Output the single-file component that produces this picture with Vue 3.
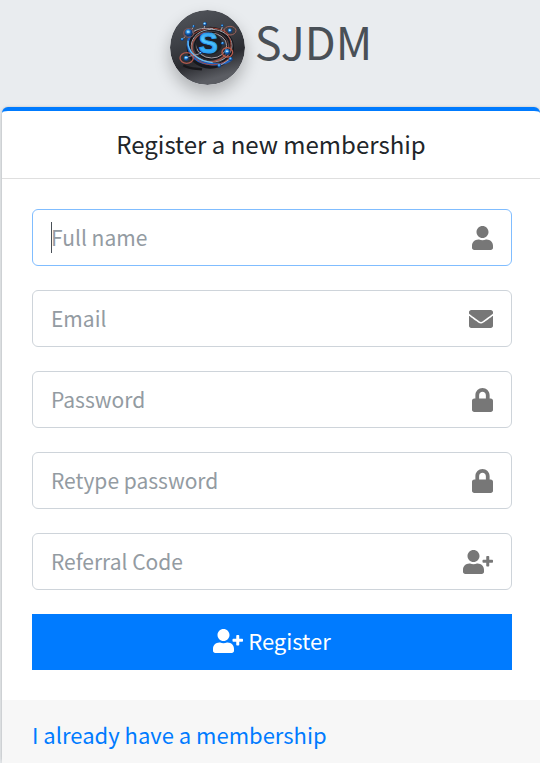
<script setup>
import { reactive } from 'vue'

const icons = {
  user: {
    width: 448,
    path: 'M224 256c70.7 0 128-57.3 128-128S294.7 0 224 0 96 57.3 96 128s57.3 128 128 128zm89.600 32h-16.700c-22.200 10.200-46.900 16-72.900 16s-50.600-5.800-72.900-16h-16.700C60.200 288 0 348.200 0 422.400V464c0 26.500 21.500 48 48 48h352c26.500 0 48-21.500 48-48v-41.600c0-74.200-60.200-134.400-134.400-134.400z',
  },
  envelope: {
    width: 512,
    path: 'M502.300 190.800c3.900-3.100 9.700-.2 9.700 4.700V400c0 26.500-21.500 48-48 48H48c-26.500 0-48-21.500-48-48V195.600c0-5 5.700-7.800 9.700-4.700 22.400 17.400 52.100 39.500 154.100 113.600 21.100 15.400 56.700 47.800 92.200 47.600 35.700.3 72-32.800 92.300-47.600 102-74.100 131.600-96.300 154-113.700zM256 320c23.200.4 56.600-29.200 73.400-41.400 132.700-96.300 142.800-104.700 173.400-128.700 5.800-4.500 9.200-11.500 9.200-18.900v-19c0-26.500-21.500-48-48-48H48c-26.500 0-48 21.500-48 48v19c0 7.400 3.400 14.300 9.200 18.900 30.600 23.900 40.700 32.400 173.400 128.700 16.800 12.200 50.200 41.800 73.400 41.400z',
  },
  lock: {
    width: 448,
    path: 'M400 224h-24v-72C376 68.200 307.800 0 224 0S72 68.200 72 152v72H48c-26.500 0-48 21.500-48 48v192c0 26.500 21.500 48 48 48h352c26.500 0 48-21.500 48-48V272c0-26.500-21.500-48-48-48zm-104 0H152v-72c0-39.700 32.300-72 72-72s72 32.300 72 72v72z',
  },
  userPlus: {
    width: 640,
    path: 'M624 208h-64v-64c0-8.800-7.200-16-16-16h-32c-8.800 0-16 7.200-16 16v64h-64c-8.800 0-16 7.200-16 16v32c0 8.800 7.200 16 16 16h64v64c0 8.800 7.200 16 16 16h32c8.800 0 16-7.200 16-16v-64h64c8.800 0 16-7.200 16-16v-32c0-8.800-7.200-16-16-16zm-400 48c70.700 0 128-57.300 128-128S294.700 0 224 0 96 57.300 96 128s57.300 128 128 128zm89.600 32h-16.700c-22.200 10.200-46.900 16-72.900 16s-50.600-5.800-72.900-16h-16.700C60.200 288 0 348.200 0 422.400V464c0 26.500 21.500 48 48 48h352c26.500 0 48-21.500 48-48v-41.600c0-74.200-60.200-134.400-134.400-134.400z',
  },
}

const fields = [
  { id: 'name', label: 'Full name', type: 'text', icon: icons.user, active: true },
  { id: 'email', label: 'Email', type: 'email', icon: icons.envelope },
  { id: 'password', label: 'Password', type: 'password', icon: icons.lock },
  { id: 'confirm', label: 'Retype password', type: 'password', icon: icons.lock },
  { id: 'referral', label: 'Referral Code', type: 'text', icon: icons.userPlus },
]

const form = reactive({ name: '', email: '', password: '', confirm: '', referral: '' })
</script>

<template>
  <div class="page">
    <header class="brand">
      <svg class="brand-logo" viewBox="30 30 225 225" aria-hidden="true">
        <defs>
          <linearGradient id="disc" x1="0" y1="0" x2="0.3" y2="1">
            <stop offset="0" stop-color="#54575d" />
            <stop offset="0.45" stop-color="#3d4046" />
            <stop offset="0.75" stop-color="#2a2b30" />
            <stop offset="1" stop-color="#5b5d63" />
          </linearGradient>
          <linearGradient id="letter" x1="0" y1="0" x2="0" y2="1">
            <stop offset="0" stop-color="#1f7ad0" />
            <stop offset="0.4" stop-color="#55cbff" />
            <stop offset="1" stop-color="#1c93ee" />
          </linearGradient>
          <radialGradient id="orb" cx="0.4" cy="0.35">
            <stop offset="0" stop-color="#8bdcff" />
            <stop offset="0.5" stop-color="#2486e0" />
            <stop offset="1" stop-color="#123c78" />
          </radialGradient>
        </defs>
        <circle cx="142.500" cy="142.500" r="112.500" fill="url(#disc)" />
        <g fill="none">
          <ellipse cx="151" cy="143" rx="65" ry="57" stroke="#17171c" stroke-width="12" />
          <ellipse cx="155" cy="137" rx="61" ry="49" stroke="#a3a6af" stroke-width="3" />
          <ellipse cx="150" cy="141" rx="54" ry="44" stroke="#9a5148" stroke-width="4" />
          <ellipse cx="153" cy="137" rx="49" ry="40" stroke="#15151b" stroke-width="4" />
          <ellipse cx="155" cy="137" rx="45" ry="37" stroke="#a59fa6" stroke-width="3" />
          <path d="M90 108C72 142 96 188 150 192c31 3 54-3 66-16" stroke="#1c5fc2" stroke-width="7" />
          <path d="M84 122c-2 34 28 61 74 66" stroke="#62c0f8" stroke-width="4" />
          <path d="M100 104c31-27 84-25 107 1M190 88c25 24 30 52 13 82M102 169c24 31 77 34 104 6" stroke="#a5483a" stroke-width="3" />
          <path d="M94 98c22-13 36-15 65-12M67 118l17-17 17-20M135 73l-3 13M188 78l-6 16M78 176c12-12 28-9 43-16M209 177l-29 20" stroke="#aaa1a8" stroke-width="3" />
          <path d="M70 196c23 14 39 8 56 12" stroke="#17171b" stroke-width="7" />
          <ellipse cx="210" cy="92" rx="18" ry="13" stroke="#9d625b" stroke-width="3" />
          <ellipse cx="80" cy="174" rx="20" ry="16" stroke="#b0594d" stroke-width="4" />
          <ellipse cx="202" cy="157" rx="16" ry="14" stroke="#b75b4b" stroke-width="4" />
          <ellipse cx="86" cy="99" rx="15" ry="13" stroke="#76545a" stroke-width="4" />
        </g>
        <ellipse cx="147" cy="131" rx="39" ry="33" fill="#1d2027" />
        <text class="logo-letter" x="145" y="158" text-anchor="middle">S</text>
        <g fill="url(#orb)">
          <circle cx="86" cy="98" r="11" />
          <circle cx="79" cy="175" r="8" />
          <circle cx="202" cy="156" r="9" />
          <circle cx="210" cy="92" r="7" />
          <circle cx="135" cy="72" r="6" />
          <circle cx="101" cy="79" r="4" />
          <circle cx="67" cy="118" r="5" />
          <circle cx="187" cy="77" r="4" />
          <circle cx="178" cy="197" r="6" />
          <circle cx="212" cy="177" r="6" />
          <circle cx="122" cy="159" r="4" />
          <circle cx="188" cy="130" r="5" />
        </g>
        <path d="M75 173h8M198 154h7M81 96h8M207 91h5M131 71h5" stroke="#bdecff" stroke-width="3" />
      </svg>
      <h1 class="brand-name">SJDM</h1>
    </header>

    <main class="card">
      <h2 class="card-header">Register a new membership</h2>
      <form class="card-body" @submit.prevent>
        <div v-for="field in fields" :key="field.id" class="field" :class="{ active: field.active }">
          <input
            :id="field.id"
            v-model="form[field.id]"
            class="field-input"
            :type="field.type"
            :placeholder="field.label"
            :aria-label="field.label"
          />
          <label class="field-icon" :for="field.id">
            <svg class="icon" :viewBox="`0 0 ${field.icon.width} 512`" aria-hidden="true">
              <path :d="field.icon.path" />
            </svg>
          </label>
        </div>
        <button class="submit" type="submit">
          <svg class="icon" viewBox="0 0 640 512" aria-hidden="true">
            <path :d="icons.userPlus.path" />
          </svg>
          <span class="submit-label">Register</span>
        </button>
      </form>
      <footer class="card-footer">
        <a class="login-link" href="#login">I already have a membership</a>
      </footer>
    </main>
  </div>
</template>

<style>
body {
  margin: 0;
  background: #e9ecef;
}
</style>

<style scoped>
.page,
.page * {
  box-sizing: border-box;
}

.page {
  display: flex;
  flex-direction: column;
  min-height: 100vh;
  padding-left: 2px;
  color: #212529;
  font-family: "Noto Sans CJK SC", "Noto Sans", sans-serif;
  font-size: 22px;
  line-height: 36px;
}

.brand {
  display: flex;
  align-items: flex-start;
  justify-content: center;
  gap: 10px;
  padding: 10px 0 22px;
}

.brand-logo {
  width: 75px;
  height: 75px;
  border-radius: 50%;
  box-shadow: 0 8px 16px rgba(0, 0, 0, 0.25);
}

.logo-letter {
  fill: url(#letter);
  stroke: #2c9df0;
  stroke-width: 3px;
  font-family: "Liberation Sans", sans-serif;
  font-size: 86px;
  font-weight: 700;
}

.brand-name {
  margin: 0;
  color: #495057;
  font-size: 45px;
  font-weight: 400;
  line-height: 62px;
}

.card {
  display: flex;
  flex: 1;
  flex-direction: column;
  border-top: 4px solid #007bff;
  border-radius: 6px;
  background: #fff;
  box-shadow: 0 0 2px rgba(0, 0, 0, 0.13), 0 2px 5px rgba(0, 0, 0, 0.2);
}

.card-header {
  margin: 0;
  padding: 15px 30px 16px;
  border-bottom: 1px solid #dfdfdf;
  font-size: 24px;
  font-weight: 400;
  text-align: center;
}

.card-body {
  display: flex;
  flex-direction: column;
  gap: 24px;
  padding: 30px;
  padding-right: 28px;
}

.field {
  position: relative;
  display: flex;
  height: 57px;
  border: 1px solid #ced4da;
  border-radius: 6px;
}

.field.active {
  border-color: #80bdff;
}

.field.active::before {
  position: absolute;
  top: 12px;
  left: 18px;
  width: 1px;
  height: 31px;
  background: #495057;
  content: "";
}

.field-input {
  flex: 1;
  min-width: 0;
  padding: 0 18px 2px;
  border: 0;
  outline: 0;
  background: transparent;
  color: #495057;
  font: inherit;
  font-size: 21px;
}

.field-input::placeholder {
  color: #939ba2;
  opacity: 1;
}

.field-icon {
  display: flex;
  align-items: center;
  padding-right: 18px;
  color: #777;
}

.icon {
  display: block;
  width: auto;
  height: 24px;
  fill: currentColor;
}

.submit {
  display: flex;
  align-items: center;
  justify-content: center;
  gap: 5px;
  height: 56px;
  padding: 0 0 2px;
  border: 0;
  background: #007bff;
  color: #fff;
  font: inherit;
  cursor: pointer;
}

.submit-label {
  padding-bottom: 2px;
}

.card-footer {
  flex: 1;
  padding: 16px 30px 9px;
  background: #f7f7f7;
}

.login-link {
  color: #007bff;
  text-decoration: none;
}
</style>
